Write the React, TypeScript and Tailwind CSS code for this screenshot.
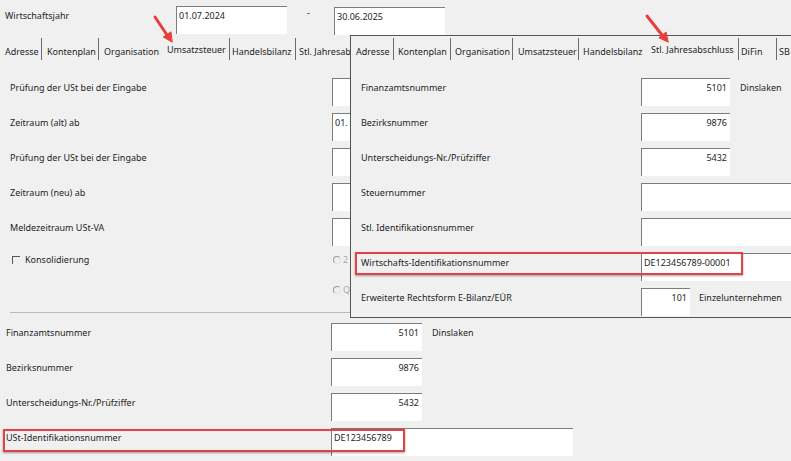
import React from 'react';

// Edit field in the old Windows look: dark top/left edge, white fill.
function Field({ className, value, right }: { className: string; value?: string; right?: boolean }) {
    return (
        <div className={`h-[28px] shrink-0 overflow-hidden bg-white border-t border-l border-[#7c7c7c] ${className}`}>
            {value && (
                <div className={`pt-[3px] leading-[12px] whitespace-nowrap ${right ? 'text-right pr-[3px]' : 'pl-[2px]'}`}>{value}</div>
            )}
        </div>
    );
}

interface TabProps {
    label: string;
    className: string;
    active?: boolean;
}

function Tab({ label, className, active }: TabProps) {
    return (
        <div className={`h-[22px] shrink-0 whitespace-nowrap overflow-hidden ${active ? 'pt-[6px]' : 'pt-[8px]'} ${className}`}>
            {label}
        </div>
    );
}

function Row({ label, children, labelClass }: { label: string; children?: React.ReactNode; labelClass: string }) {
    return (
        <div className="flex h-[28px]">
            <div className={`shrink-0 pt-[4px] leading-[12px] whitespace-nowrap ${labelClass}`}>{label}</div>
            {children}
        </div>
    );
}

function Radio({ text }: { text: string }) {
    return (
        <div className="flex items-center gap-[2px]">
            <div className="w-[8px] h-[8px] rounded-full border border-[#e2e2e2] border-t-[#9a9a9a] border-l-[#9a9a9a]" />
            <span className="text-[#a8a8a8]">{text}</span>
        </div>
    );
}

export default function App() {
    return (
        <div className="relative w-[791px] h-[461px] overflow-hidden bg-[#f0f0f0] text-[9px] leading-[12px] text-[#1e1e1e] font-['Noto_Sans',sans-serif]">
            {/* Wirtschaftsjahr */}
            <div className="flex h-[38px]">
                <div className="w-[176px] pl-[5px] pt-[10px]">Wirtschaftsjahr</div>
                <Field className="mt-[6px] w-[111px] h-[27px]" value="01.07.2024" />
                <div className="w-[47px] pl-[20px] pt-[7px]">-</div>
                <Field className="mt-[7px] w-[111px] h-[27px]" value="30.06.2025" />
            </div>

            {/* background tabs */}
            <div className="flex h-[22px]">
                <Tab label="Adresse" className="w-[42px] pl-[5px] border-r border-[#6b6b6b]" />
                <Tab label="Kontenplan" className="w-[57px] pl-[5px] border-r border-[#6b6b6b]" />
                <Tab label="Organisation" className="w-[61px] pl-[5px]" />
                <Tab label="Umsatzsteuer" className="w-[70px] pl-[7px] border-r border-[#6b6b6b]" active />
                <Tab label="Handelsbilanz" className="w-[66px] pl-[2px] border-r border-[#6b6b6b]" />
                <Tab label="Stl. Jahresab" className="w-[54px] pl-[3px]" />
            </div>

            {/* Umsatzsteuer page */}
            <div className="mt-[18px] flex flex-col gap-[7px]">
                <Row label="Prüfung der USt bei der Eingabe" labelClass="w-[332px] pl-[10px]">
                    <Field className="w-[18px]" />
                </Row>
                <Row label="Zeitraum (alt) ab" labelClass="w-[332px] pl-[10px]">
                    <Field className="w-[18px]" value="01." />
                </Row>
                <Row label="Prüfung der USt bei der Eingabe" labelClass="w-[332px] pl-[10px]">
                    <Field className="w-[18px]" />
                </Row>
                <Row label="Zeitraum (neu) ab" labelClass="w-[332px] pl-[10px]">
                    <Field className="w-[18px]" />
                </Row>
                <Row label="Meldezeitraum USt-VA" labelClass="w-[332px] pl-[10px]">
                    <Field className="w-[18px]" />
                </Row>
            </div>

            <div className="mt-[7px] flex h-[14px] items-center">
                <div className="w-[333px] flex items-center pl-[12px]">
                    <div className="w-[8px] h-[8px] border-t border-l border-[#5a5a5a]" />
                    <span className="ml-[5px]">Konsolidierung</span>
                </div>
                <Radio text="2" />
            </div>
            <div className="mt-[16px] flex h-[14px] items-center pl-[333px]">
                <Radio text="Q" />
            </div>

            <div className="mt-[15px] ml-[10px] w-[340px] h-px bg-[#b9b9b9]" />

            <div className="mt-[10px] flex flex-col gap-[7px]">
                <Row label="Finanzamtsnummer" labelClass="w-[331px] pl-[6px]">
                    <Field className="w-[91px]" value="5101" right />
                    <div className="pl-[10px] pt-[4px]">Dinslaken</div>
                </Row>
                <Row label="Bezirksnummer" labelClass="w-[331px] pl-[6px]">
                    <Field className="w-[91px]" value="9876" right />
                </Row>
                <Row label="Unterscheidungs-Nr./Prüfziffer" labelClass="w-[331px] pl-[6px]">
                    <Field className="w-[91px]" value="5432" right />
                </Row>
                <div className="relative">
                    <Row label="USt-Identifikationsnummer" labelClass="w-[331px] pl-[6px]">
                        <Field className="w-[242px]" value="DE123456789" />
                    </Row>
                    <div className="absolute left-[3px] top-[1px] w-[402px] h-[23px] border-2 border-[#e2434a] shadow-[0_1px_2px_rgba(0,0,0,0.35)]" />
                </div>
            </div>

            {/* Stl. Jahresabschluss page on top */}
            <div className="absolute left-[350px] top-[35px] w-[460px] h-[283px] border border-[#555] bg-[#f0f0f0]">
                <div className="mt-[2px] flex h-[22px]">
                    <Tab label="Adresse" className="w-[43px] pl-[5px] border-r border-[#6b6b6b]" />
                    <Tab label="Kontenplan" className="w-[57px] pl-[4px] border-r border-[#6b6b6b]" />
                    <Tab label="Organisation" className="w-[62px] pl-[4px] border-r border-[#6b6b6b]" />
                    <Tab label="Umsatzsteuer" className="w-[66px] pl-[5px] border-r border-[#6b6b6b]" />
                    <Tab label="Handelsbilanz" className="w-[66px] pl-[4px]" />
                    <Tab label="Stl. Jahresabschluss" className="w-[94px] pl-[6px] border-r border-[#6b6b6b]" active />
                    <Tab label="DiFin" className="w-[38px] pl-[2px] border-r border-[#6b6b6b]" />
                    <Tab label="SB" className="w-[30px] pl-[2px]" />
                </div>

                <div className="mt-[18px] flex flex-col gap-[7px]">
                    <Row label="Finanzamtsnummer" labelClass="w-[290px] pl-[10px]">
                        <Field className="w-[89px]" value="5101" right />
                        <div className="pl-[10px] pt-[4px]">Dinslaken</div>
                    </Row>
                    <Row label="Bezirksnummer" labelClass="w-[290px] pl-[10px]">
                        <Field className="w-[89px]" value="9876" right />
                    </Row>
                    <Row label="Unterscheidungs-Nr./Prüfziffer" labelClass="w-[290px] pl-[10px]">
                        <Field className="w-[89px]" value="5432" right />
                    </Row>
                    <Row label="Steuernummer" labelClass="w-[290px] pl-[10px]">
                        <Field className="w-[170px]" />
                    </Row>
                    <Row label="Stl. Identifikationsnummer" labelClass="w-[290px] pl-[10px]">
                        <Field className="w-[170px]" />
                    </Row>
                    <div className="relative">
                        <Row label="Wirtschafts-Identifikationsnummer" labelClass="w-[290px] pl-[10px]">
                            <Field className="w-[170px]" value="DE123456789-00001" />
                        </Row>
                        <div className="absolute left-[4px] top-[-1px] w-[388px] h-[23px] border-2 border-[#e2434a] shadow-[0_1px_2px_rgba(0,0,0,0.35)]" />
                    </div>
                    <Row label="Erweiterte Rechtsform E-Bilanz/EÜR" labelClass="w-[290px] pl-[10px]">
                        <Field className="w-[49px]" value="101" right />
                        <div className="pl-[9px] pt-[4px]">Einzelunternehmen</div>
                    </Row>
                </div>
            </div>

            {/* red arrows */}
            <svg className="absolute left-0 top-0 pointer-events-none" width="791" height="461" viewBox="0 0 791 461">
                <g stroke="#e5403d" strokeWidth="3" strokeLinecap="round" fill="#e5403d">
                    <line x1="155" y1="17" x2="167" y2="35" />
                    <polygon points="172,42 163.2,37 170.7,32" strokeWidth="1" strokeLinejoin="round" />
                    <line x1="647" y1="16" x2="662" y2="35" />
                    <polygon points="668,42 658.8,37.8 665.8,32.2" strokeWidth="1" strokeLinejoin="round" />
                </g>
            </svg>
        </div>
    );
}
